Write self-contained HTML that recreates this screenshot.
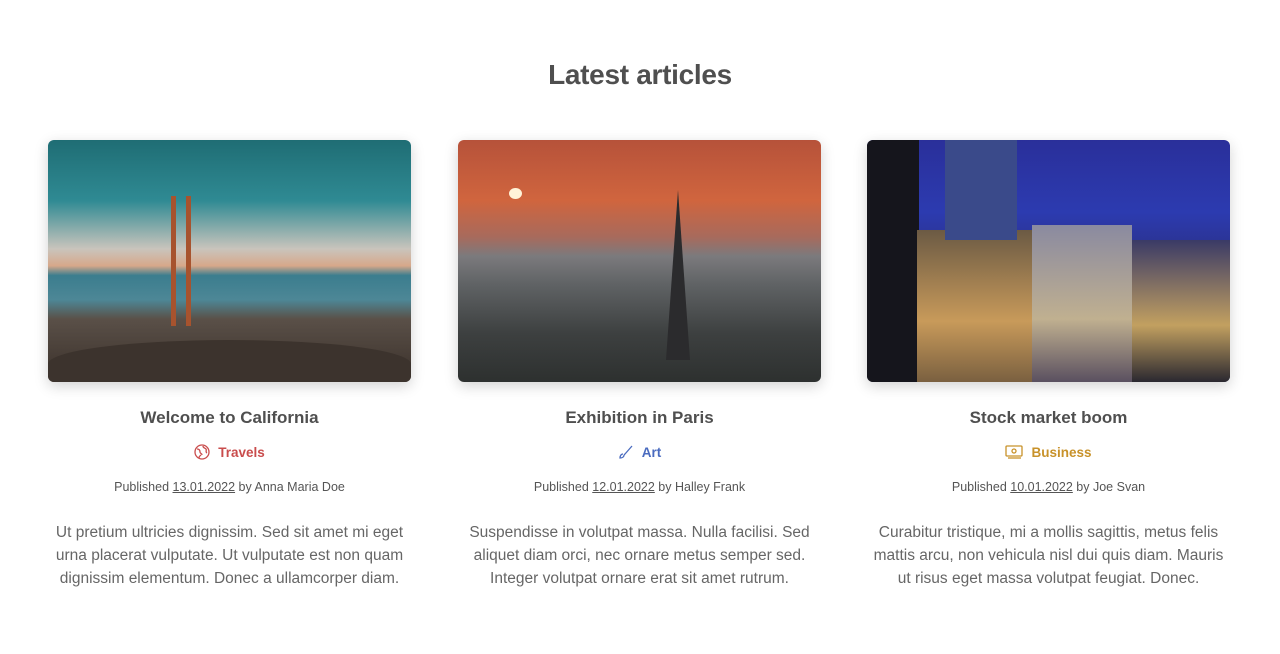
<!DOCTYPE html>
<html><head><meta charset="utf-8"><style>
body{margin:0;background:#fff;font-family:"Liberation Sans",Arial,sans-serif;color:#4f4f4f;width:1280px;height:654px;overflow:hidden}
h2{position:absolute;top:59px;left:0;width:1280px;text-align:center;margin:0;font-size:28px;font-weight:bold;color:#4f4f4f;letter-spacing:-0.3px}
.card{position:absolute;top:140px;width:363px;text-align:center}
.img{height:242px;border-radius:6px;box-shadow:0 4px 14px rgba(0,0,0,0.18);position:relative;overflow:hidden}
.t{margin-top:26px;font-size:17px;font-weight:bold;color:#4f4f4f}
.c{margin-top:16px;font-size:13.5px;font-weight:bold;display:flex;justify-content:center;align-items:center;gap:8px}
.p{margin-top:20px;font-size:12.5px;color:#555}
.p u{text-decoration:underline}
.d{margin-top:27px;font-size:15.5px;line-height:23px;color:#666;padding:0 6px}
</style></head><body>
<h2>Latest articles</h2>

<div class="card" style="left:48px">
<div class="img" style="background:linear-gradient(180deg,#1f6d74 0%,#2f8a93 25%,#c9c4bc 45%,#d7a88a 52%,#3b7d8e 56%,#4d8796 66%,#5a5048 74%,#3a302a 100%)">
<div style="position:absolute;left:0;top:200px;width:363px;height:60px;background:#3c332d;border-radius:50% 50% 0 0/40% 40% 0 0"></div>
<div style="position:absolute;left:123px;top:56px;width:5px;height:130px;background:#a7532e"></div>
<div style="position:absolute;left:138px;top:56px;width:5px;height:130px;background:#a7532e"></div>
</div>
<div class="t">Welcome to California</div>
<div class="c" style="color:#c94c4c"><svg width="16" height="16" viewBox="0 0 16 16" fill="none" stroke="#c94c4c" stroke-width="1.3"><circle cx="8" cy="8" r="7"/><path d="M3 5c2 0 3 1 3 3s2 1 2 3M9 2c0 2 2 2 3 3s-1 3 1 4M5 14c0-2 1-2 2-3"/></svg>Travels</div>
<div class="p">Published <u>13.01.2022</u> by Anna Maria Doe</div>
<div class="d">Ut pretium ultricies dignissim. Sed sit amet mi eget urna placerat vulputate. Ut vulputate est non quam dignissim elementum. Donec a ullamcorper diam.</div>
</div>

<div class="card" style="left:458px">
<div class="img" style="background:linear-gradient(180deg,#b6523a 0%,#d0653e 25%,#a86a5c 40%,#7b7a7d 48%,#5f6264 60%,#3d4040 80%,#2d302f 100%)">
<div style="position:absolute;left:51px;top:48px;width:13px;height:11px;border-radius:50%;background:#fff3d8"></div>
<div style="position:absolute;left:208px;top:50px;width:0;height:0;border-left:12px solid transparent;border-right:12px solid transparent;border-bottom:170px solid #2b2b2d"></div>
</div>
<div class="t">Exhibition in Paris</div>
<div class="c" style="color:#4a6bbf"><svg width="16" height="16" viewBox="0 0 16 16" fill="none" stroke="#4a6bbf" stroke-width="1.3"><path d="M14 2L7 10M5 10c-2 0-3 2-3 4 2 0 4-1 4-3M7 10l-1 1"/></svg>Art</div>
<div class="p">Published <u>12.01.2022</u> by Halley Frank</div>
<div class="d">Suspendisse in volutpat massa. Nulla facilisi. Sed aliquet diam orci, nec ornare metus semper sed. Integer volutpat ornare erat sit amet rutrum.</div>
</div>

<div class="card" style="left:867px">
<div class="img" style="background:linear-gradient(180deg,#2a2f9a 0%,#2c3bb0 30%,#2a2a70 60%,#1d1d3a 100%)">
<div style="position:absolute;left:0;top:0;width:52px;height:242px;background:#15151c"></div>
<div style="position:absolute;left:50px;top:90px;width:120px;height:152px;background:linear-gradient(180deg,#6b5a44,#c89a5a 60%,#7a6040)"></div>
<div style="position:absolute;left:78px;top:0;width:72px;height:100px;background:#3a4a8a"></div>
<div style="position:absolute;left:165px;top:85px;width:100px;height:157px;background:linear-gradient(180deg,#8a8aa0,#c0b090 60%,#5a5060)"></div>
<div style="position:absolute;left:265px;top:100px;width:98px;height:142px;background:linear-gradient(180deg,#3a3a66,#c2a060 60%,#2a2830)"></div>
</div>
<div class="t">Stock market boom</div>
<div class="c" style="color:#c8922a"><svg width="18" height="16" viewBox="0 0 18 16" fill="none" stroke="#c8922a" stroke-width="1.3"><rect x="1" y="2" width="16" height="10" rx="1"/><circle cx="9" cy="7" r="2"/><path d="M3 14h13"/></svg>Business</div>
<div class="p">Published <u>10.01.2022</u> by Joe Svan</div>
<div class="d">Curabitur tristique, mi a mollis sagittis, metus felis mattis arcu, non vehicula nisl dui quis diam. Mauris ut risus eget massa volutpat feugiat. Donec.</div>
</div>
</body></html>
